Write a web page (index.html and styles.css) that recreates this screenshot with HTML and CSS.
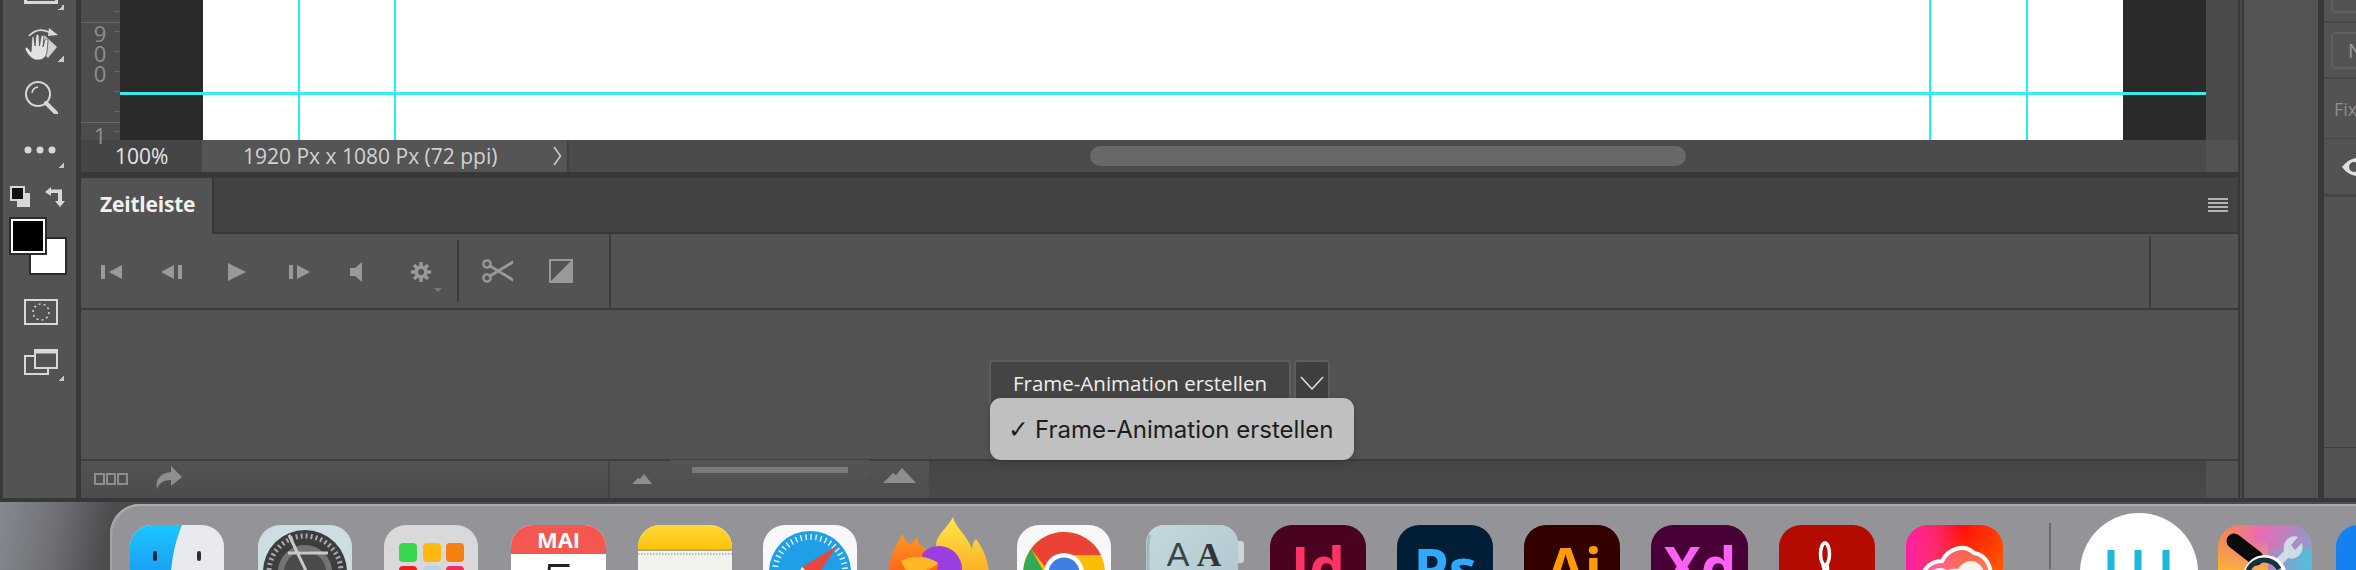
FILE: index.html
```html
<!DOCTYPE html>
<html lang="de">
<head>
<meta charset="utf-8">
<title>Zeitleiste</title>
<link rel="stylesheet" href="styles.css">
</head>
<body>
<div class="app">
  <aside class="tools">
    <div class="tool t-top"><svg width="34" height="4" viewBox="0 0 34 4"><path d="M1.5 0V2.5H32.5V0" fill="none" stroke="#d8d8d8" stroke-width="3"/></svg><i class="corner"></i></div>
    <div class="tool t-hand"><svg width="34" height="34" viewBox="0 0 34 34"><path d="M5 9 Q14 -1 27 6" fill="none" stroke="#d8d8d8" stroke-width="1.6"/><path d="M25 1 L34 8 L24 9Z" fill="#d8d8d8"/><path d="M20 8 L33 20 L24 31 L20 27Z" fill="#d0d0d0"/><path d="M11 33 C6 31 2 25 1 22 C1 20 3 20 4 21 L7 25 L8 11 C8 9 10 9 10 11 L11 19 L12 9 C12 7 15 7 15 9 L15.500 19 L17 10 C17 8 20 8 20 10 L19 20 L21 13 C22 11 24 12 24 14 L23 25 C22 30 19 33 15 33Z" fill="#e2e2e2" stroke="#535353" stroke-width=".8"/></svg><i class="corner"></i></div>
    <div class="tool t-zoom"><svg width="34" height="34" viewBox="0 0 34 34"><circle cx="14" cy="14" r="12" fill="none" stroke="#d8d8d8" stroke-width="2"/><path d="M8 13 A7 7 0 0 1 14 7" fill="none" stroke="#d8d8d8" stroke-width="1.500"/><path d="M22 23 L32 33" stroke="#d8d8d8" stroke-width="4" stroke-linecap="round"/></svg></div>
    <div class="tool t-more"><svg width="32" height="8" viewBox="0 0 32 8"><circle cx="4" cy="4" r="3.500" fill="#d8d8d8"/><circle cx="16" cy="4" r="3.500" fill="#d8d8d8"/><circle cx="28" cy="4" r="3.500" fill="#d8d8d8"/></svg><i class="corner"></i></div>
    <div class="swap-row">
      <svg width="21" height="22" viewBox="0 0 21 22"><rect x="7" y="7" width="13" height="14" fill="#d8d8d8"/><rect x="1" y="1" width="13" height="13" fill="#111" stroke="#d8d8d8" stroke-width="2"/></svg>
      <svg width="20" height="22" viewBox="0 0 20 22"><path d="M6 1 L0 6 L6 10 V7 H13 V15 H10 L15 21 L20 15 H17 V3.500 H6Z" fill="#d8d8d8"/></svg>
    </div>
    <div class="colors"><div class="swatch bg"></div><div class="swatch fg"></div></div>
    <div class="tool t-mask"><svg width="34" height="26" viewBox="0 0 34 26"><rect x="1" y="1" width="32" height="24" fill="none" stroke="#d8d8d8" stroke-width="2"/><circle cx="17" cy="13" r="8" fill="none" stroke="#d8d8d8" stroke-width="1.500" stroke-dasharray="2 3"/></svg></div>
    <div class="tool t-screen"><svg width="34" height="26" viewBox="0 0 34 26"><path d="M1 7H24V25H1Z" fill="none" stroke="#d8d8d8" stroke-width="2"/><path d="M11 1H33V19H11Z" fill="#535353" stroke="#d8d8d8" stroke-width="2"/><path d="M11 3H33" stroke="#d8d8d8" stroke-width="3"/></svg><i class="corner"></i></div>
  </aside>

  <main class="center">
    <section class="doc">
      <div class="ruler">
        <span class="tick-long first"></span>
        <span class="digit">9</span><span class="digit">0</span><span class="digit">0</span>
        <span class="tick-long second"></span>
        <span class="digit one">1</span>
      </div>
      <div class="canvas">
        <div class="page"></div>
        <i class="guide-v g1"></i><i class="guide-v g2"></i><i class="guide-v g3"></i><i class="guide-v g4"></i>
        <i class="guide-h"></i>
      </div>
      <div class="vscroll"></div>
    </section>
    <section class="status">
      <div class="zoom">100%</div>
      <div class="info"><span>1920 Px x 1080 Px (72 ppi)</span><svg width="9" height="20" viewBox="0 0 9 20"><path d="M1 1 L7.500 10 L1 19" fill="none" stroke="#d0d0d0" stroke-width="1.500"/></svg></div>
      <div class="hscroll"><div class="thumb"></div></div>
      <div class="corner-box"></div>
    </section>
    <section class="panel">
      <header class="tabbar">
        <div class="tab">Zeitleiste</div>
        <svg class="menu-icon" width="20" height="14" viewBox="0 0 20 14"><path d="M0 1H20M0 5H20M0 9H20M0 13H20" stroke="#b4b4b4" stroke-width="2"/></svg>
      </header>
      <div class="controls">
        <div class="transport">
          <svg width="21" height="14" viewBox="0 0 21 14"><path d="M0 0H4V14H0ZM21 0V14L8 7Z" fill="#999"/></svg>
          <svg width="21" height="14" viewBox="0 0 21 14"><path d="M0 7 L13 0V14ZM17 0H21V14H17Z" fill="#999"/></svg>
          <svg width="18" height="18" viewBox="0 0 18 18"><path d="M0 0 L18 9 L0 18Z" fill="#999"/></svg>
          <svg width="21" height="14" viewBox="0 0 21 14"><path d="M0 0H4V14H0ZM8 0 L21 7 L8 14Z" fill="#999"/></svg>
          <svg width="12" height="20" viewBox="0 0 12 20"><path d="M12 0V20L5 14H0V6H5Z" fill="#999"/></svg>
          <div class="gear"><svg width="20" height="20" viewBox="0 0 20 20"><g stroke="#999" stroke-width="3.400"><path d="M10 0V20M0 10H20M3 3L17 17M17 3L3 17"/></g><circle cx="10" cy="10" r="6.500" fill="#999"/><circle cx="10" cy="10" r="3" fill="#535353"/></svg><i class="mini-tri"></i></div>
        </div>
        <div class="edit">
          <svg width="31" height="24" viewBox="0 0 31 24"><g fill="none" stroke="#999" stroke-width="2.400"><circle cx="5" cy="5" r="3.600"/><circle cx="5" cy="19" r="3.600"/></g><path d="M8 7 L31 21M8 17 L31 3" stroke="#999" stroke-width="2.800" stroke-linecap="round"/></svg>
          <svg width="24" height="24" viewBox="0 0 24 24"><rect x="1" y="1" width="22" height="22" fill="none" stroke="#999" stroke-width="2"/><path d="M23 1V23H1Z" fill="#999"/></svg>
        </div>
        <div class="ctl-fill"></div>
        <div class="ctl-end"></div>
      </div>
      <div class="timeline">
        <div class="create">
          <button class="create-btn" type="button">Frame-Animation erstellen</button>
          <button class="arrow-btn" type="button" aria-label="Menü"><svg width="24" height="14" viewBox="0 0 24 14"><path d="M1 1 L12 13 L23 1" fill="none" stroke="#e6e6e6" stroke-width="1.400"/></svg></button>
        </div>
        <div class="popup"><span class="check">✓</span><span>Frame-Animation erstellen</span></div>
      </div>
      <footer class="foot">
        <div class="foot-left">
          <svg width="34" height="12" viewBox="0 0 34 12"><g fill="none" stroke="#8e8e8e" stroke-width="2"><rect x="1" y="1" width="9" height="10"/><rect x="13" y="1" width="8" height="10"/><rect x="24" y="1" width="9" height="10"/></g></svg>
          <svg class="share" width="26" height="23" viewBox="0 0 26 23"><path d="M15 0 L26 11 L15 20 V14 C8 14 3 17 1 23 C-1 13 5 7 15 6Z" fill="#8e8e8e"/></svg>
        </div>
        <div class="foot-zoom">
          <svg class="m-small" width="20" height="10" viewBox="0 0 20 10"><path d="M0 10 L6 4 L8 5 L12 0 L20 10Z" fill="#8e8e8e"/></svg>
          <div class="slider-zone"><div class="slider"></div></div>
          <svg class="m-large" width="33" height="15" viewBox="0 0 33 15"><path d="M0 15 L10 5 L13 7 L19 0 L33 15Z" fill="#8e8e8e"/></svg>
        </div>
        <div class="foot-fill"></div>
        <div class="foot-end"></div>
      </footer>
    </section>
  </main>

  <div class="side"></div>

  <aside class="rpanel">
    <div class="r-row r1"><div class="r-btn cut"><span>S</span></div></div>
    <div class="r-row r2"><div class="r-btn"><span>N</span></div></div>
    <div class="r-row r3"><span class="fix">Fix</span></div>
    <div class="r-row r4"><svg width="14" height="18" viewBox="0 0 14 18"><path d="M0 9 Q6 1 14 0 V18 Q6 17 0 9Z" fill="#e0e0e0"/><circle cx="12" cy="9" r="5" fill="#535353"/></svg></div>
    <div class="r-fill"></div>
    <div class="r-bottom"></div>
  </aside>
</div>

<nav class="desk">
  <div class="dock">
    <svg class="app-icon finder" width="94" height="94" viewBox="0 0 94 94"><defs><linearGradient id="fb" x1="0" y1="0" x2="0" y2="1"><stop offset="0" stop-color="#1cc6ff"/><stop offset="1" stop-color="#1a78ea"/></linearGradient><clipPath id="r94"><rect width="94" height="94" rx="22"/></clipPath></defs><g clip-path="url(#r94)"><rect width="94" height="94" fill="#e9eaee"/><path d="M0 0H52 C44 20 40 36 38 94 H0Z" fill="url(#fb)"/></g><rect x="23" y="26" width="4" height="10" rx="2" fill="#1d2a3a"/><rect x="67" y="26" width="4" height="10" rx="2" fill="#2d3136"/></svg>

    <svg class="app-icon prefs" width="94" height="94" viewBox="0 0 94 94"><rect width="94" height="94" rx="22" fill="#cddde2"/><circle cx="47" cy="47" r="42" fill="#3c3d3f"/><circle cx="47" cy="47" r="36" fill="none" stroke="#a8a9ab" stroke-width="5" stroke-dasharray="2 3"/><circle cx="47" cy="47" r="27" fill="#737477"/><circle cx="47" cy="47" r="21" fill="#4a4b4d"/><path d="M31 10 L50 50M30 28 L70 28" stroke="#c8c9cb" stroke-width="3" fill="none"/></svg>

    <svg class="app-icon launch" width="94" height="94" viewBox="0 0 94 94"><rect width="94" height="94" rx="22" fill="#d9d9db"/><rect x="15" y="18" width="18" height="19" rx="4" fill="#37d84c"/><rect x="39" y="18" width="18" height="19" rx="4" fill="#fdb912"/><rect x="62" y="18" width="18" height="19" rx="4" fill="#f57f10"/><rect x="15" y="41" width="18" height="19" rx="4" fill="#ee1c24"/><rect x="39" y="41" width="18" height="19" rx="4" fill="#bcd4e0"/><rect x="62" y="41" width="18" height="19" rx="4" fill="#f42a67"/></svg>

    <svg class="app-icon cal" width="95" height="94" viewBox="0 0 95 94"><defs><clipPath id="r95"><rect width="95" height="94" rx="22"/></clipPath></defs><g clip-path="url(#r95)"><rect width="95" height="94" fill="#fff"/><rect width="95" height="29" fill="#f4574f"/></g><text class="cal-month" x="47.500" y="23">MAI</text><text class="cal-day" x="47.500" y="84">5</text></svg>

    <svg class="app-icon notes" width="94" height="94" viewBox="0 0 94 94"><defs><linearGradient id="ny" x1="0" y1="0" x2="0" y2="1"><stop offset="0" stop-color="#ffd83a"/><stop offset="1" stop-color="#fdc40a"/></linearGradient></defs><g clip-path="url(#r94)"><rect width="94" height="94" fill="#f3f2ee"/><rect width="94" height="24" fill="url(#ny)"/><rect y="24" width="94" height="2" fill="#b5a878"/><path d="M0 29H94" stroke="#bbb" stroke-width="2" stroke-dasharray="1.500 1.500"/></g></svg>

    <svg class="app-icon safari" width="94" height="94" viewBox="0 0 94 94"><rect width="94" height="94" rx="22" fill="#f8f8f8"/><circle cx="47" cy="47" r="41" fill="#1f9fe8"/><circle cx="47" cy="47" r="35" fill="none" stroke="#dff1fb" stroke-width="6" stroke-dasharray="1.500 3.500"/><path d="M74 21 L39 42 L52 54Z" fill="#e5483d"/><path d="M20 73 L39 42 L52 54Z" fill="#f3f3f3"/></svg>

    <svg class="app-icon firefox" width="104" height="102" viewBox="0 0 104 102"><defs><linearGradient id="ffy" x1="0" y1="0" x2="0" y2="1"><stop offset="0" stop-color="#fee84a"/><stop offset=".7" stop-color="#fbb326"/></linearGradient><linearGradient id="ffo" x1="0" y1="0" x2="0" y2="1"><stop offset="0" stop-color="#ff9a1f"/><stop offset=".6" stop-color="#ff6a1a"/></linearGradient></defs><path d="M49 30 C48 18 60 12 66 0 C68 10 80 18 85 32 L86 26 L89 22 C98 34 104 48 102 74 H70 C76 56 66 38 49 30Z" fill="url(#ffy)"/><circle cx="52" cy="52" r="23" fill="#9a3fe0"/><path d="M0 74 C0 48 6 30 16 17 C18 24 20 26 24 27 L30 20 C31 26 34 30 40 32 C34 36 34 40 38 42 C44 42 48 44 51 46 L48 74Z" fill="url(#ffo)"/><path d="M14 44 C24 38 40 38 51 46 C44 54 30 56 18 52Z" fill="#ffb627"/></svg>

    <svg class="app-icon chrome" width="94" height="94" viewBox="0 0 94 94"><rect width="94" height="94" rx="22" fill="#f8f8f8"/><circle cx="47" cy="48" r="41" fill="#fbbc05"/><path d="M47 7 A41 41 0 0 1 84 30 H47 C38 30 31 36 29 43 L14 24 A41 41 0 0 1 47 7Z" fill="#ea4335"/><path d="M14 24 L32 56 L47 89 A41 41 0 0 1 14 24Z" fill="#34a853"/><circle cx="47" cy="48" r="20" fill="#fff"/><circle cx="47" cy="48" r="15.500" fill="#3f7fe0"/></svg>

    <svg class="app-icon fontbook" width="98" height="94" viewBox="0 0 98 94"><defs><linearGradient id="fbk" x1="0" y1="0" x2="1" y2="1"><stop offset="0" stop-color="#c6d9dd"/><stop offset="1" stop-color="#abc3ca"/></linearGradient></defs><rect x="88" y="16" width="10" height="22" rx="3" fill="#ccd5d8"/><rect width="92" height="94" rx="18" fill="url(#fbk)"/><path d="M4 10 Q2 14 2 22 V94" fill="none" stroke="#a2b6bc" stroke-width="3"/><text class="fb-a" x="32" y="41">A</text><text class="fb-b" x="63" y="41">A</text></svg>

    <svg class="app-icon" width="96" height="94" viewBox="0 0 96 94"><rect width="96" height="94" rx="22" fill="#49021f"/><text class="cc-text id" x="48" y="62">Id</text></svg>
    <svg class="app-icon" width="96" height="94" viewBox="0 0 96 94"><rect width="96" height="94" rx="22" fill="#001e36"/><text class="cc-text ps" x="48" y="64">Ps</text></svg>
    <svg class="app-icon" width="96" height="94" viewBox="0 0 96 94"><rect width="96" height="94" rx="22" fill="#330000"/><text class="cc-text ai" x="50" y="63">Ai</text></svg>
    <svg class="app-icon" width="97" height="94" viewBox="0 0 97 94"><rect width="97" height="94" rx="22" fill="#470137"/><text class="cc-text xd" x="49" y="62">Xd</text></svg>

    <svg class="app-icon" width="96" height="94" viewBox="0 0 96 94"><rect width="96" height="94" rx="22" fill="#b30b00"/><ellipse cx="46" cy="29" rx="4.500" ry="11" fill="none" stroke="#fff" stroke-width="3.500"/><path d="M48 40 C50 48 46 58 36 70M44 40 C46 50 52 58 62 64" fill="none" stroke="#fff" stroke-width="3.500"/></svg>

    <svg class="app-icon creative" width="97" height="94" viewBox="0 0 97 94"><defs><radialGradient id="ccg" cx=".55" cy="0" r="1.050"><stop offset="0" stop-color="#ff0a0a"/><stop offset=".6" stop-color="#ff5a00"/><stop offset="1" stop-color="#ffa600"/></radialGradient><linearGradient id="ccp" x1="0" y1="0" x2="1" y2="0"><stop offset="0" stop-color="#ff1ea8"/><stop offset=".35" stop-color="#ff1ea8" stop-opacity=".55"/><stop offset=".6" stop-color="#ff1ea8" stop-opacity="0"/></linearGradient></defs><rect width="97" height="94" rx="22" fill="url(#ccg)"/><rect width="97" height="94" rx="22" fill="url(#ccp)"/><path d="M15 66 C12 46 24 36 36 36 C42 24 58 18 68 28 C80 30 88 42 84 62" fill="#f9c6d6" fill-opacity=".35" stroke="#fff" stroke-width="4"/><path d="M30 66 C30 50 40 42 52 44 C58 34 72 32 78 46 L78 66Z" fill="#fff" opacity=".9"/><circle cx="34" cy="56" r="11" fill="none" stroke="#fff" stroke-width="4"/></svg>

    <i class="dock-sep"></i>

    <svg class="app-icon circle-app" width="118" height="118" viewBox="0 0 118 118"><circle cx="59" cy="59" r="59" fill="#fff"/><path d="M31 37V90M58 37V90M86 37V90" stroke="#1ab8d9" stroke-width="7"/></svg>

    <svg class="app-icon toolbox" width="94" height="94" viewBox="0 0 94 94"><defs><linearGradient id="tbx" x1="0" y1="0" x2="1" y2=".3"><stop offset="0" stop-color="#f98f3c"/><stop offset=".45" stop-color="#e76bb5"/><stop offset=".8" stop-color="#a98cc4"/><stop offset="1" stop-color="#8e9fcc"/></linearGradient><linearGradient id="tbo" x1="0" y1="0" x2="0" y2="1"><stop offset=".15" stop-color="#fdbb2d" stop-opacity="0"/><stop offset=".55" stop-color="#fdbb2d"/></linearGradient><linearGradient id="tbc" x1="0" y1="0" x2="1" y2="0"><stop offset=".5" stop-color="#4fbfd8" stop-opacity="0"/><stop offset="1" stop-color="#4fbfd8"/></linearGradient><clipPath id="tbclip"><rect width="94" height="94" rx="22"/></clipPath></defs><g clip-path="url(#tbclip)"><rect width="94" height="94" fill="url(#tbx)"/><rect width="50" height="94" fill="url(#tbo)"/><rect y="24" width="94" height="70" fill="url(#tbc)"/></g><path d="M16 16 L38 33" stroke="#0a0a0a" stroke-width="15" stroke-linecap="round"/><path d="M56 36 L66 26 C64 16 72 9 80 12 L73 20 L77 25 L84 18 C87 28 78 36 70 33 L60 44 C58 46 54 40 56 36Z" fill="#cfdbe6"/><circle cx="47" cy="52" r="20" fill="none" stroke="#fff" stroke-width="4"/><path d="M31 60 A16 16 0 0 1 61 44" fill="none" stroke="#17323f" stroke-width="5"/></svg>

    <svg class="app-icon" width="94" height="94" viewBox="0 0 94 94"><rect width="94" height="94" rx="22" fill="#1580ef"/></svg>
  </div>
</nav>
</body>
</html>
```

FILE: styles.css
```css
* { box-sizing: border-box; }
html, body { margin: 0; padding: 0; }
body {
  width: 2356px;
  height: 570px;
  overflow: hidden;
  background: #3a3a3a;
  font-family: "Open Sans", "Liberation Sans", sans-serif;
}
svg { display: block; flex: none; }

.app {
  display: flex;
  height: 502px;
  background: #383838;
  padding-bottom: 4px;
}

/* left tool strip */
.tools {
  width: 74px;
  margin-left: 2px;
  background: #535353;
  border-left: 1px solid #3c3c3c;
  margin-right: 5px;
  padding-left: 21px;
  flex: none;
}
.tool { position: relative; width: 34px; }
.corner {
  position: absolute;
  left: 34px;
  bottom: 0;
  width: 6px;
  height: 6px;
  background: linear-gradient(135deg, transparent 50%, #c8c8c8 50%);
}
.t-top { height: 10px; }
.t-hand { margin-top: 17px; height: 35px; }
.t-zoom { margin-top: 18px; height: 34px; }
.t-more { margin-top: 32px; height: 22px; }
.swap-row { display: flex; gap: 14px; margin: 18px 0 0 -14px; width: 56px; }
.colors { position: relative; width: 60px; height: 58px; margin: 9px 0 0 -15px; }
.swatch { position: absolute; width: 38px; height: 38px; border: 2px solid #2c2c2c; }
.swatch.fg { left: 0; top: 0; background: #000; box-shadow: inset 0 0 0 2px #fff; }
.swatch.bg { left: 20px; top: 20px; background: #fff; }
.t-mask { margin-top: 24px; height: 26px; }
.t-screen { margin-top: 24px; height: 32px; }

/* centre */
.center {
  width: 2157px;
  flex: none;
  display: flex;
  flex-direction: column;
  height: 498px;
}
.doc { display: flex; height: 140px; }
.ruler {
  position: relative;
  width: 39px;
  flex: none;
  background-color: #4c4c4c;
  background-image: repeating-linear-gradient(to bottom, transparent 0 11px, #636363 11px 12px, transparent 12px 20px);
  background-size: 6px 100%;
  background-position: right top;
  background-repeat: no-repeat;
  padding: 23px 0 0 12px;
  color: #8f8f8f;
  font-size: 22px;
  line-height: 20px;
}
.digit { display: block; width: 14px; text-align: center; }
.digit.one { position: absolute; left: 12px; top: 125px; }
.tick-long { position: absolute; left: 0; right: 0; height: 1px; background: #666; }
.tick-long.first { top: 22px; }
.tick-long.second { top: 122px; }
.canvas {
  position: relative;
  width: 2086px;
  flex: none;
  background: #2a2a2a;
  padding-left: 83px;
}
.page { width: 1920px; height: 140px; background: #fff; }
.guide-v { position: absolute; top: 0; bottom: 0; width: 2px; background: #1df2f2; }
.g1 { left: 178px; }
.g2 { left: 274px; }
.g3 { left: 1809px; }
.g4 { left: 1906px; }
.guide-h { position: absolute; left: 0; right: 0; top: 92px; height: 3px; background: #36eeee; }
.vscroll { flex: 1; background: #4b4b4b; }

.status { display: flex; height: 32px; background: #4b4b4b; flex: none; }
.zoom {
  width: 121px;
  flex: none;
  background: #454545;
  color: #e6e6e6;
  font-size: 21px;
  line-height: 32px;
  padding-left: 34px;
}
.info {
  width: 367px;
  flex: none;
  background: #555;
  color: #d2d2d2;
  font-size: 21px;
  line-height: 32px;
  padding-left: 41px;
  display: flex;
  align-items: center;
  gap: 50px;
  border-right: 2px solid #414141;
}
.info span { width: 260px; flex: none; white-space: nowrap; }
.hscroll { flex: 1; padding: 6px 0 0 521px; }
.thumb { width: 596px; height: 20px; border-radius: 10px; background: #686868; }
.corner-box { width: 32px; background: #525252; flex: none; }

.panel {
  flex: 1;
  margin-top: 6px;
  display: flex;
  flex-direction: column;
  background: #535353;
}
.tabbar {
  height: 56px;
  flex: none;
  display: flex;
  justify-content: space-between;
  align-items: center;
  background: #424242;
  border-bottom: 2px solid #383838;
  padding-right: 10px;
}
.tab {
  width: 133px;
  height: 56px;
  background: #535353;
  border-right: 2px solid #383838;
  margin-bottom: -2px;
  color: #f0f0f0;
  font-weight: 700;
  font-size: 21px;
  line-height: 52px;
  padding-left: 19px;
  letter-spacing: -0.2px;
}
.controls {
  height: 76px;
  flex: none;
  display: flex;
  border-bottom: 2px solid #393939;
}
.transport {
  width: 378px;
  flex: none;
  padding: 1px 0 0 20px;
  display: flex;
  align-items: center;
  margin: 6px 0;
  gap: 39px;
  border-right: 2px solid #3c3c3c;
}
.transport > :nth-child(3) { margin-left: 7px; }
.transport > :nth-child(4) { margin-left: 4px; }
.transport > :nth-child(5) { margin-left: 1px; }
.gear { position: relative; margin-left: 10px; }
.mini-tri {
  position: absolute;
  left: 23px;
  top: 26px;
  width: 0;
  height: 0;
  border: 4px solid transparent;
  border-top: 4px solid #777;
}
.edit {
  width: 152px;
  flex: none;
  display: flex;
  align-items: center;
  gap: 36px;
  padding-left: 23px;
  border-right: 2px solid #3c3c3c;
}
.ctl-fill { width: 1540px; flex: none; border-right: 2px solid #3c3c3c; margin-top: 2px; }
.ctl-end { flex: 1; }

.timeline { position: relative; flex: 1; background: #535353; }
.create { display: flex; gap: 3px; margin: 50px 0 0 908px; }
.create-btn {
  width: 302px;
  height: 46px;
  background: #444;
  border: 2px solid #5e5e5e;
  border-radius: 4px;
  color: #ededed;
  font-family: "Open Sans", "Liberation Sans", sans-serif;
  font-size: 20.500px;
  padding: 0;
}
.arrow-btn {
  width: 36px;
  height: 46px;
  background: #3f3f3f;
  border: 2px solid #5e5e5e;
  border-radius: 4px;
  padding: 0 0 0 4px;
}
.popup {
  position: absolute;
  left: 909px;
  top: 88px;
  width: 364px;
  height: 62px;
  border-radius: 11px;
  background: #c0c0c0;
  color: #1d1d1f;
  display: flex;
  align-items: center;
  padding-left: 18px;
  font-family: Inter, Roboto, "Liberation Sans", sans-serif;
  font-size: 24px;
  box-shadow: 0 2px 8px rgba(0,0,0,.18);
}
.check { width: 27px; flex: none; font-family: "DejaVu Sans", sans-serif; font-size: 25px; font-weight: 700; }

.foot {
  height: 39px;
  flex: none;
  display: flex;
  border-top: 2px solid #3d3d3d;
  background: #4b4b4b;
}
.foot-left {
  width: 527px;
  flex: none;
  padding: 5px 0 0 13px;
  display: flex;
  gap: 28px;
  background: linear-gradient(#535353, #4c4c4c);
}
.foot-left svg:first-child { margin-top: 7px; }
.foot-zoom {
  width: 321px;
  flex: none;
  display: flex;
  border-left: 2px solid #444;
  background: linear-gradient(#535353, #4e4e4e);
}
.m-small { margin: 13px 0 0 22px; }
.slider-zone {
  width: 199px;
  margin: -3px 0 0 18px;
  height: 20px;
  border-top: 2px solid #424242;
  background: #535353;
  padding: 7px 0 0 22px;
  flex: none;
}
.slider { width: 156px; height: 6px; background: #7a7a7a; }
.m-large { margin: 7px 0 0 14px; }
.foot-fill { width: 1277px; flex: none; background: linear-gradient(#454545, #4a4a4a); }
.foot-end { flex: 1; background: #535353; }

/* right strips */
.side {
  width: 80px;
  flex: none;
  height: 498px;
  background: #545454;
  border-left: 2px solid #383838;
  box-shadow: inset 2px 0 0 #4a4a4a, inset 4px 0 0 #393939;
}
.rpanel {
  margin-left: 6px;
  flex: 1;
  height: 498px;
  display: flex;
  flex-direction: column;
  background: #535353;
  overflow: hidden;
}
.r-row {
  border-bottom: 1px solid #464646;
  padding-left: 7px;
  flex: none;
  display: flex;
  align-items: center;
  color: #888;
  font-size: 19px;
}
.r1 { height: 23px; align-items: flex-end; padding-bottom: 8px; border-bottom: 2px solid #464646; }
.r2 { height: 56px; border-bottom: 2px solid #464646; }
.r3 { height: 60px; padding-left: 10px; }
.r4 { height: 58px; padding-left: 18px; border-bottom: 3px solid #464646; }
.r-btn {
  width: 60px;
  height: 37px;
  flex: none;
  border: 2px solid #606060;
  border-radius: 5px;
  padding-left: 15px;
  line-height: 33px;
  color: #9a9a9a;
  font-size: 20px;
}
.r-btn.cut { height: 20px; border-top: 0; border-radius: 0 0 5px 5px; line-height: 0; }
.fix { color: #8c8c8c; font-size: 18px; }
.r-fill { height: 251px; flex: none; border-bottom: 1px solid #3f3f3f; }
.r-bottom { flex: 1; }

/* dock */
.desk {
  height: 68px;
  padding-left: 110px;
  padding-top: 2px;
  background: linear-gradient(100deg, #868a90 0, #6d6f74 60px, #4d4d50 110px);
}
.dock {
  height: 120px;
  display: flex;
  align-items: flex-start;
  padding: 21px 0 0 20px;
  border-radius: 30px 0 0 0;
  background: #949397;
  box-shadow: inset 0 2px 0 #ababad, inset 2px 2px 0 #a2a2a4;
}
.app-icon { margin-right: 31px; }
.finder { margin-right: 34px; }
.prefs { margin-right: 32px; }
.launch { margin-right: 33px; }
.cal { margin-right: 32px; }
.notes { margin-right: 31px; }
.safari { margin-right: 30px; }
.firefox { margin: -8px 26px 0 0; }
.chrome { margin-right: 35px; }
.fontbook { margin-right: 26px; }
.creative { margin-right: 46px; }
.dock-sep { width: 2px; height: 46px; flex: none; margin: -2px 29px 0 0; background: #6a6a6e; }
.circle-app { margin: -12px 20px 0 0; }
.toolbox { margin-right: 24px; }

.cal-month { fill: #fff; font: 700 22px "Open Sans", sans-serif; text-anchor: middle; }
.cal-day { fill: #222; font: 300 62px "Open Sans", sans-serif; text-anchor: middle; }
.fb-a { fill: #39454a; font: 400 34px "Liberation Sans", sans-serif; text-anchor: middle; }
.fb-b { fill: #2d373b; font: 700 34px "Liberation Serif", serif; text-anchor: middle; }
.cc-text { font: 700 56px "Open Sans", sans-serif; text-anchor: middle; }
.id { fill: #ff3366; }
.ps { fill: #31a8ff; }
.ai { fill: #ff9a00; }
.xd { fill: #ff61f6; }
```
